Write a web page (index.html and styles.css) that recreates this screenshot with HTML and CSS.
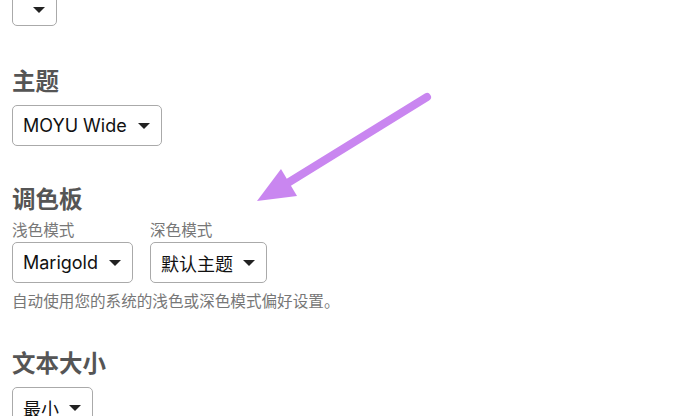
FILE: index.html
```html
<!DOCTYPE html>
<html>
<head>
  <meta charset="utf-8">
  <link rel="stylesheet" href="styles.css">
  <title>设置</title>
</head>
<body>
  <main class="settings">
    <section class="field field-cut">
      <div class="picker picker-empty"><span class="caret"></span></div>
    </section>

    <section class="field">
      <h2>主题</h2>
      <div class="picker">MOYU Wide<span class="caret"></span></div>
    </section>

    <section class="field">
      <h2>调色板</h2>
      <div class="modes">
        <div class="mode">
          <div class="mode-label">浅色模式</div>
          <div class="picker">Marigold<span class="caret"></span></div>
        </div>
        <div class="mode">
          <div class="mode-label">深色模式</div>
          <div class="picker picker-cjk">默认主题<span class="caret"></span></div>
        </div>
      </div>
      <p class="hint">自动使用您的系统的浅色或深色模式偏好设置。</p>
    </section>

    <section class="field">
      <h2>文本大小</h2>
      <div class="picker picker-cjk">最小<span class="caret"></span></div>
    </section>
  </main>

  <!-- pointer drawn over the page -->
  <svg class="arrow" width="690" height="416" viewBox="0 0 690 416">
    <line x1="427" y1="97" x2="286" y2="184" stroke="#c986f0" stroke-width="8" stroke-linecap="round"/>
    <polygon points="257,201 281,169 297,196" fill="#c986f0"/>
  </svg>
</body>
</html>
```

FILE: styles.css
```css
body {
  margin: 0;
  background-color: #fff;
  font-family: Inter, "Noto Sans CJK SC", sans-serif;
  color: #111;
  overflow: hidden;
}
.settings {
  display: flex;
  flex-direction: column;
  gap: 37px;
  margin-top: -15px;
  padding-left: 12px;
}
.field-cut {
  margin-bottom: 2px;
}
.field h2 {
  margin: 0 0 10px;
  font-family: "Noto Sans CJK SC", sans-serif;
  font-size: 23.5px;
  line-height: 30px;
  font-weight: bold;
  color: #555;
}
.picker {
  display: inline-flex;
  align-items: center;
  box-sizing: border-box;
  height: 41px;
  padding: 0 11px 0 10px;
  border: 1px solid #aaa;
  border-radius: 5px;
  font-size: 18px;
  color: #111;
  background: #fff;
}
.picker-empty {
  padding-left: 10px;
  padding-top: 8px;
}
.picker-empty .caret {
  margin-left: 10px;
}
.caret {
  display: inline-block;
  width: 0;
  height: 0;
  margin-left: 11px;
  border-left: 6px solid transparent;
  border-right: 6px solid transparent;
  border-top: 6px solid #222;
}
.picker-cjk .caret {
  margin-left: 10px;
}
.modes {
  display: flex;
  gap: 17px;
}
.mode {
  display: flex;
  flex-direction: column;
  align-items: flex-start;
}
.mode-label {
  margin: -4px 0 3px;
  font-family: "Noto Sans CJK SC", sans-serif;
  font-size: 15.6px;
  line-height: 20px;
  color: #777;
}
.hint {
  margin: 7px 0 0;
  font-family: "Noto Sans CJK SC", sans-serif;
  font-size: 15.6px;
  line-height: 20px;
  color: #777;
}
.arrow {
  position: absolute;
  top: 0;
  left: 0;
  pointer-events: none;
}
```
